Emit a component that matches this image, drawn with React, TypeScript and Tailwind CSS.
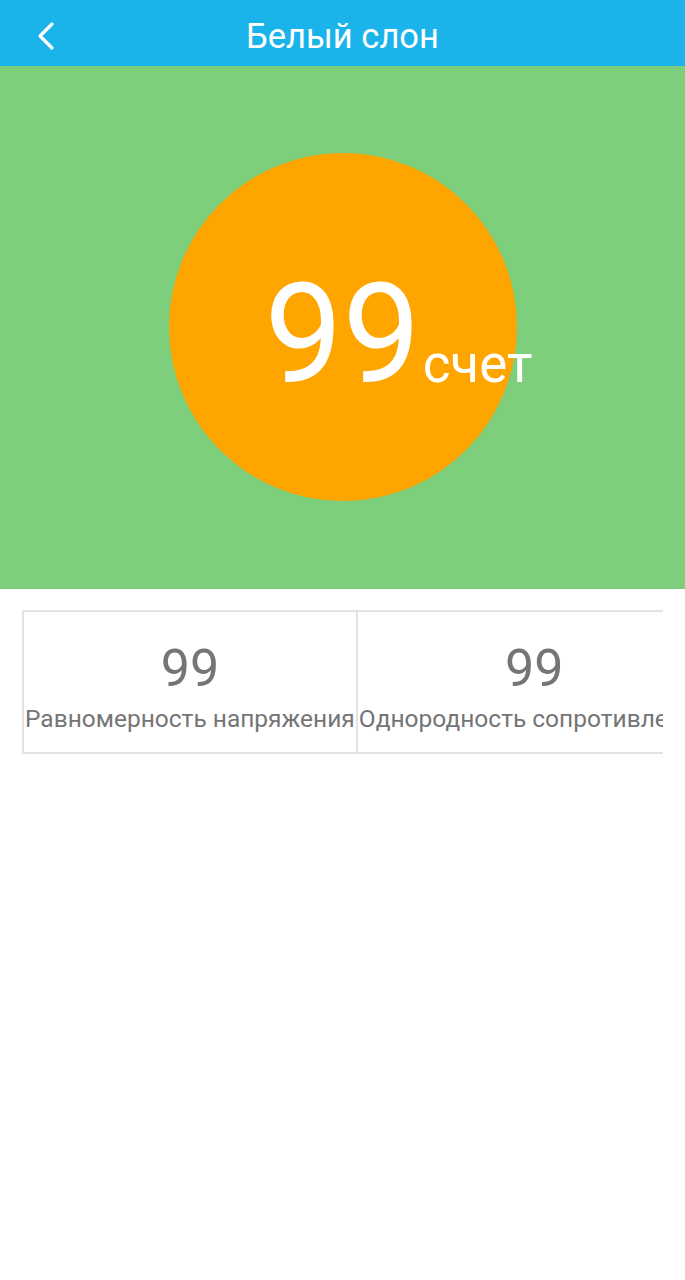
import React from "react";

const font = { fontFamily: "Roboto, 'Noto Sans', sans-serif" };

// 指標セル。数値とラベルを縦に並べ、幅はラベルに合わせる。
function MetricCell({ value, label }: { value: number; label: string }) {
  return (
    <div className="shrink-0 border-r-2 border-[#e3e3e3] px-[1px] pt-[29px] pb-[18px] text-center">
      <div className="text-[52px] leading-[56px] text-[#757575]">{value}</div>
      <div className="mt-[7px] whitespace-nowrap text-[24.5px] leading-[30px] text-[#757575]">{label}</div>
    </div>
  );
}

export default function App() {
  return (
    <div className="min-h-[1280px] w-[685px] bg-white" style={font}>
      <header className="relative flex h-[66px] items-center justify-center bg-[#1bb4ea]">
        <button className="absolute left-[30px] top-[20px] flex h-[32px] w-[32px] items-center justify-center">
          <svg width="24" height="32" viewBox="0 0 24 32" fill="none">
            <path d="M18 4 L6 16 L18 28" stroke="white" strokeWidth="3.2" strokeLinecap="round" strokeLinejoin="round" />
          </svg>
        </button>
        <h1 className="mt-[6px] text-[34.5px] leading-none text-white">Белый слон</h1>
      </header>

      <section className="flex h-[523px] items-center justify-center bg-[#7dcf7b]">
        <div className="mt-[-1px] flex h-[348px] w-[348px] items-center justify-center rounded-full bg-[#ffa500]">
          <span className="mt-[14px] text-[139px] leading-none text-white">
            99
            <span className="inline-block w-0 whitespace-nowrap text-[53px] leading-none">
              <span className="pl-[2px]">счет</span>
            </span>
          </span>
        </div>
      </section>

      <div className="mx-[22px] mt-[21px] flex overflow-hidden border-2 border-r-0 border-[#e3e3e3]">
        <MetricCell value={99} label="Равномерность напряжения" />
        <MetricCell value={99} label="Однородность сопротивления" />
      </div>
    </div>
  );
}
